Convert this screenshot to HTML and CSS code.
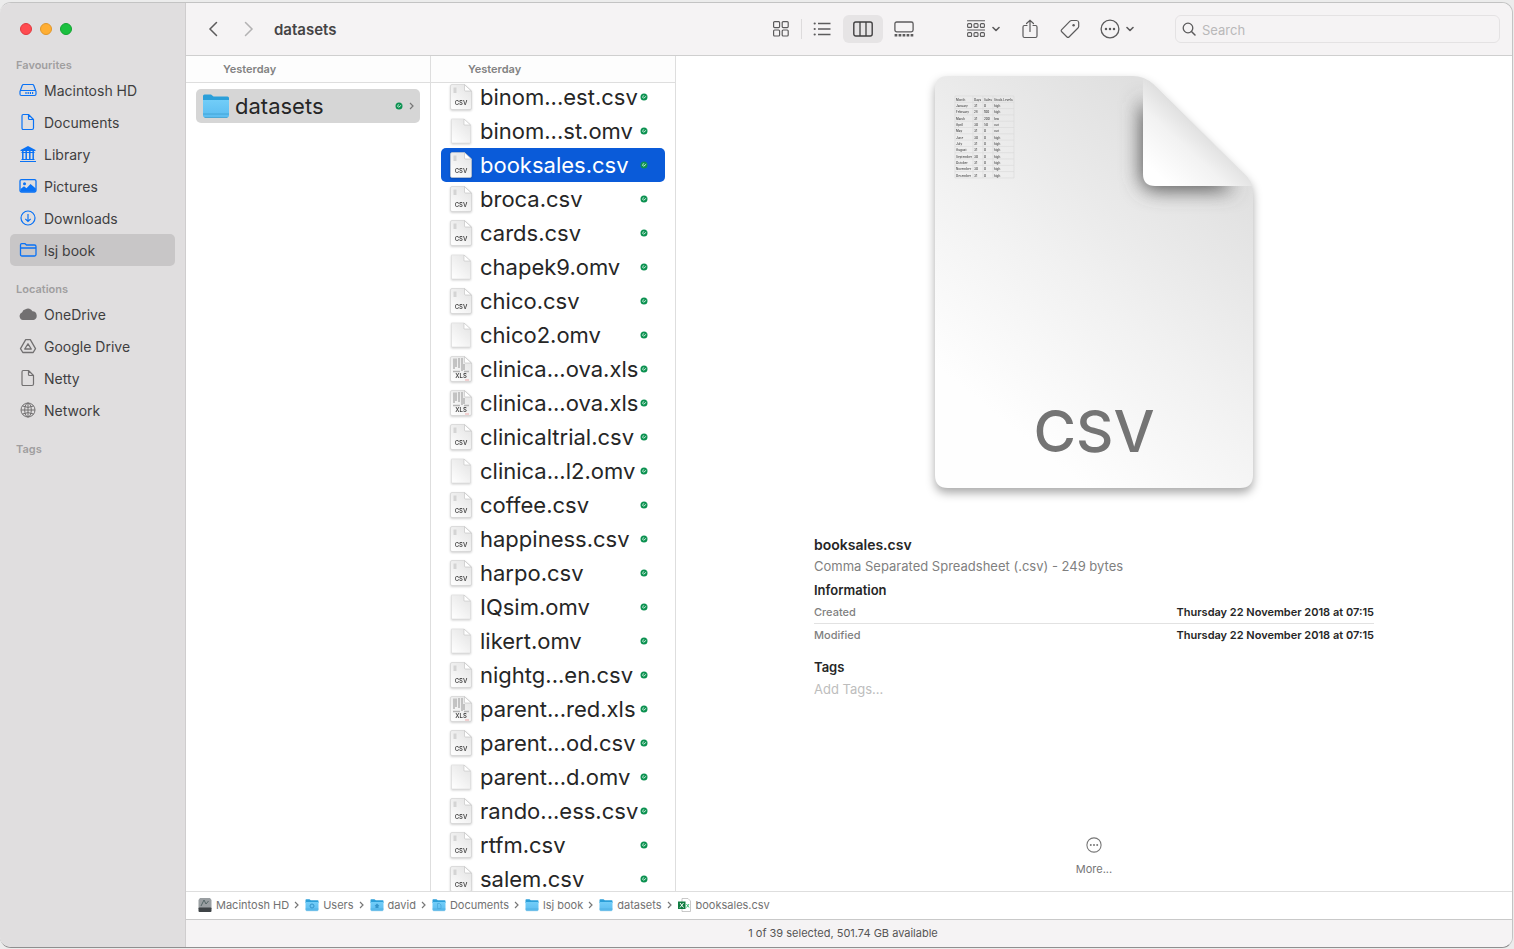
FILE: index.html
```html
<!DOCTYPE html>
<html lang="en-GB">
<head>
  <meta charset="utf-8">
  <title>datasets</title>
  <link rel="stylesheet" href="styles.css">
</head>

<body>
  <!-- Shared icons -->
  <svg class="sprite" aria-hidden="true">
    <defs>
      <linearGradient id="paper" x1="1" y1="0" x2="0.2" y2="1">
        <stop offset="0" stop-color="#e2e2e2"/>
        <stop offset="1" stop-color="#fdfdfd"/>
      </linearGradient>
      <linearGradient id="folder-front" x1="0" y1="0" x2="0" y2="1">
        <stop offset="0" stop-color="#72cdf8"/>
        <stop offset="1" stop-color="#5bbcf0"/>
      </linearGradient>
    </defs>
    <symbol id="page" viewBox="0 0 22 26">
      <path d="M2 .5H14.5L21.5 7V24Q21.5 25.500 20 25.500H2Q.5 25.500 .5 24V2Q.5.5 2 .5Z" fill="url(#paper)" stroke="#cfcfcf" stroke-width=".6"/>
      <path d="M14.500.7V6Q14.500 7 15.500 7H21.300Z" fill="#fff" stroke="#bdbdbd" stroke-width=".6"/>
    </symbol>
    <symbol id="csv" viewBox="0 0 22 26">
      <use href="#page" width="22" height="26"/>
      <path d="M3.500 3.500H6.500V9H3.500Z" fill="#d4d4d4"/>
      <text x="11" y="21" class="ext">CSV</text>
    </symbol>
    <symbol id="xls" viewBox="0 0 22 26">
      <use href="#page" width="22" height="26"/>
      <path d="M4 2.500V13M6 2.500V11M9 2V12M12 2V15M14 8V14M3 15.500H10M14 15.500H19" stroke="#b4b4b4" stroke-width="1.500"/>
      <path d="M15 24H19" stroke="#eba9a9"/>
      <text x="11" y="22" class="ext">XLS</text>
    </symbol>
    <symbol id="omv" viewBox="0 0 22 26">
      <path d="M1.500 1H14L20.500 7V25H1.500Z" fill="url(#paper)" stroke="#dcdcdc" stroke-width=".6"/>
      <path d="M14 1V7H20.500Z" fill="#fff" stroke="#c4c4c4" stroke-width=".6"/>
    </symbol>
    <symbol id="synced" viewBox="0 0 8 8">
      <circle cx="4" cy="4" r="3.500" fill="#0b9150"/>
      <path d="M2.400 3.400L4.200 2.700M2.400 4L3.600 5.300L6.200 3.200" fill="none" stroke="#d8f3e4" stroke-width=".9"/>
    </symbol>
    <symbol id="folder" viewBox="0 0 28 26">
      <path d="M1 3Q1 1.500 2.500 1.500H9L11.500 3.500H25.500Q27 3.500 27 5V9H1Z" fill="#2b9fd9"/>
      <path d="M1 7H27V22.500Q27 24.500 25 24.500H3Q1 24.500 1 22.500Z" fill="url(#folder-front)"/>
      <path d="M1 21H27M2.500 24.500H25.500" stroke="#3b9fd0" stroke-width=".8"/>
    </symbol>
    <symbol id="arrow-right" viewBox="0 0 5 8">
      <path d="M1 1L4 4L1 7" fill="none" stroke="currentColor" stroke-width="1.200"/>
    </symbol>
    <symbol id="arrow-down" viewBox="0 0 8 6">
      <path d="M1 1.500L4 4.500L7 1.500" fill="none" stroke="currentColor" stroke-width="1.600" stroke-linecap="round" stroke-linejoin="round"/>
    </symbol>
    <symbol id="ellipsis" viewBox="0 0 18 18">
      <circle cx="9" cy="9" r="8" fill="none" stroke="currentColor" stroke-width="1.200"/>
      <circle cx="5.400" cy="9" r="1.100" fill="currentColor"/>
      <circle cx="9" cy="9" r="1.100" fill="currentColor"/>
      <circle cx="12.600" cy="9" r="1.100" fill="currentColor"/>
    </symbol>
    <symbol id="sheet" viewBox="0 0 18 18">
      <path d="M4.200 1.500H9.500L14.500 6.500V15Q14.500 16.500 13 16.500H4.200Q3 16.500 3 15V3Q3 1.500 4.200 1.500ZM9.500 1.500V5.500Q9.500 6.500 10.500 6.500H14.500" fill="none" stroke="currentColor" stroke-width="1.200" stroke-linejoin="round"/>
    </symbol>
  </svg>

  <div class="window">
    <aside class="sidebar">
      <div class="lights">
        <button class="light red" aria-label="Close"></button>
        <button class="light yellow" aria-label="Minimise"></button>
        <button class="light green" aria-label="Zoom"></button>
      </div>

      <nav>
        <h2>Favourites</h2>
        <ul class="places">
          <li><a href="#">
            <svg viewBox="0 0 18 18"><path d="M4.500 3.500H13.500Q14.400 3.500 14.800 4.500L17 10.500V13Q17 14.500 15.500 14.500H2.500Q1 14.500 1 13V10.500L3.200 4.500Q3.600 3.500 4.500 3.500ZM1.500 9.500H16.500" fill="none" stroke="currentColor" stroke-width="1.200"/><path d="M7 11V13M9.200 11V13M11.400 11V13M13.600 11V13" stroke="currentColor" stroke-width="1.200"/></svg>
            Macintosh HD</a></li>
          <li><a href="#"><svg><use href="#sheet"/></svg>Documents</a></li>
          <li><a href="#">
            <svg viewBox="0 0 18 18"><path d="M9 1L16.500 5V6H1.500V5Z" fill="currentColor"/><path d="M3.800 6V15M7.200 6V15M10.800 6V15M14.200 6V15" stroke="currentColor" stroke-width="1.500"/><path d="M2.500 7.500H15.500M2.500 14.500H15.500M1 16.500H17" stroke="currentColor" stroke-width="1"/></svg>
            Library</a></li>
          <li><a href="#">
            <svg viewBox="0 0 18 18"><rect x="1" y="2.600" width="16" height="12.400" rx="1.500" fill="none" stroke="currentColor" stroke-width="1.300"/><circle cx="5.500" cy="6.800" r="1.500" fill="currentColor"/><path d="M1.500 12L5 9.200L7.500 11.300L11.500 7L16.800 11.500V14.800H1.500Z" fill="currentColor"/></svg>
            Pictures</a></li>
          <li><a href="#">
            <svg viewBox="0 0 18 18"><circle cx="9" cy="9" r="7" fill="none" stroke="currentColor" stroke-width="1.200"/><path d="M9 5V12.500M6.300 9.800L9 12.500L11.700 9.800" fill="none" stroke="currentColor" stroke-width="1.200"/></svg>
            Downloads</a></li>
          <li><a href="#" class="current">
            <svg viewBox="0 0 18 18"><path d="M1.500 13V4Q1.500 2.700 2.800 2.700H6L7.500 4H15.500Q17 4 17 5.500V13.500Q17 15 15.500 15H3Q1.500 15 1.500 13.500ZM1.500 7H17" fill="none" stroke="currentColor" stroke-width="1.300"/></svg>
            lsj book</a></li>
        </ul>

        <h2>Locations</h2>
        <ul class="places grey">
          <li><a href="#">
            <svg viewBox="0 0 18 18"><path d="M4 15A4 4 0 0 1 3.200 7.300A4 4 0 0 1 6.500 4.200A5 5 0 0 1 13.500 6.200A4.500 4.500 0 0 1 14.500 15Z" fill="currentColor"/></svg>
            OneDrive</a></li>
          <li><a href="#">
            <svg viewBox="0 0 18 18"><path d="M6.700 2.700H11.300L16.500 11.600L14.200 15.500H3.800L1.500 11.600ZM9 6.800L12.300 12H5.700Z" fill="none" stroke="currentColor" stroke-width="1.300" stroke-linejoin="round"/></svg>
            Google Drive</a></li>
          <li><a href="#"><svg><use href="#sheet"/></svg>Netty</a></li>
          <li><a href="#">
            <svg viewBox="0 0 18 18"><g fill="none" stroke="currentColor"><circle cx="9" cy="9" r="7"/><ellipse cx="9" cy="9" rx="3.300" ry="7"/><path d="M9 2V16M2 9H16M3.500 5Q9 7.800 14.500 5M3.500 13Q9 10.200 14.500 13"/></g></svg>
            Network</a></li>
        </ul>

        <h2>Tags</h2>
      </nav>
    </aside>

    <main>
      <header class="toolbar">
        <button class="arrow" aria-label="Back"><svg viewBox="0 0 10 16"><path d="M8.500 1.500L2 8L8.500 14.500" fill="none" stroke="currentColor" stroke-width="1.500" stroke-linecap="round"/></svg></button>
        <button class="arrow forward" aria-label="Forward"><svg viewBox="0 0 10 16"><path d="M1.500 1.500L8 8L1.500 14.500" fill="none" stroke="currentColor" stroke-width="1.500" stroke-linecap="round"/></svg></button>
        <h1>datasets</h1>

        <div class="views">
          <button aria-label="Icons"><svg viewBox="0 0 20 18"><g fill="none" stroke="currentColor" stroke-width="1.200"><rect x="2.600" y="1.600" width="6" height="6" rx="1"/><rect x="11.200" y="1.600" width="6" height="6" rx="1"/><rect x="2.600" y="10" width="6" height="6" rx="1"/><rect x="11.200" y="10" width="6" height="6" rx="1"/></g></svg></button>
          <span class="divider"></span>
          <button aria-label="List"><svg viewBox="0 0 20 18"><path d="M6 3.500H18.500M6 9H18.500M6 14.500H18.500" stroke="currentColor" stroke-width="1.300"/><g fill="currentColor"><circle cx="2.700" cy="3.500" r="1.100"/><circle cx="2.700" cy="9" r="1.100"/><circle cx="2.700" cy="14.500" r="1.100"/></g></svg></button>
          <button class="pressed" aria-label="Columns"><svg viewBox="0 0 20 18"><rect x=".8" y="2" width="18.400" height="14" rx="2" fill="none" stroke="currentColor" stroke-width="1.400"/><path d="M7 2V16M13 2V16" stroke="currentColor" stroke-width="1.300"/></svg></button>
          <button aria-label="Gallery"><svg viewBox="0 0 20 18"><rect x=".9" y="2" width="18.200" height="9.800" rx="1.800" fill="none" stroke="currentColor" stroke-width="1.300"/><path d="M.6 15.300H19.500" stroke="currentColor" stroke-width="2.400" stroke-dasharray="2.700 1.300"/></svg></button>
        </div>

        <div class="actions">
          <button class="menu" aria-label="Group"><svg viewBox="0 0 20 18"><g fill="none" stroke="currentColor" stroke-width="1.100"><path d="M1 .7H19M1 10H19"/><rect x="1.600" y="3.600" width="4" height="3.800" rx="1"/><rect x="8" y="3.600" width="4" height="3.800" rx="1"/><rect x="14.400" y="3.600" width="4" height="3.800" rx="1"/><rect x="1.600" y="12.600" width="4" height="3.800" rx="1"/><rect x="8" y="12.600" width="4" height="3.800" rx="1"/><rect x="14.400" y="12.600" width="4" height="3.800" rx="1"/></g></svg><svg class="down"><use href="#arrow-down"/></svg></button>
          <button aria-label="Share"><svg viewBox="0 0 20 20"><path d="M7 6.500H4.500Q3 6.500 3 8V17Q3 18.500 4.500 18.500H15.500Q17 18.500 17 17V8Q17 6.500 15.500 6.500H13M10 12.500V1.500M6.500 4.500L10 1.200L13.500 4.500" fill="none" stroke="currentColor" stroke-width="1.200" stroke-linecap="round"/></svg></button>
          <button aria-label="Tags"><svg viewBox="0 0 20 20"><path d="M11.500 1.500H16.500Q18.500 1.500 18.700 3.500V7.500Q18.600 8.500 17.700 9.300L9 18Q8 19 7 18L1.500 12.500Q.8 11.700 1.500 10.800L10 2.200Q10.700 1.500 11.500 1.500Z" fill="none" stroke="currentColor" stroke-width="1.200"/><circle cx="13.600" cy="6.300" r="1.200" fill="currentColor"/></svg></button>
          <button class="menu" aria-label="More actions"><svg><use href="#ellipsis"/></svg><svg class="down"><use href="#arrow-down"/></svg></button>
        </div>

        <label class="search">
          <svg viewBox="0 0 14 14"><circle cx="6" cy="6" r="4.800" fill="none" stroke="currentColor" stroke-width="1.300"/><path d="M9.500 9.500L13 13" stroke="currentColor" stroke-width="1.500" stroke-linecap="round"/></svg>
          <input type="search" placeholder="Search" aria-label="Search">
        </label>
      </header>

      <div class="browser">
        <section class="column">
          <h2>Yesterday</h2>
          <ul class="files">
            <li><a href="#" class="opened"><svg class="dir"><use href="#folder"/></svg>datasets<svg class="badge"><use href="#synced"/></svg><svg class="chevron"><use href="#arrow-right"/></svg></a></li>
          </ul>
        </section>

        <section class="column">
          <h2>Yesterday</h2>
          <ul class="files scrolled">
            <li><a href="#"><svg class="doc"><use href="#csv"/></svg>binom...est.csv<svg class="badge"><use href="#synced"/></svg></a></li>
            <li><a href="#"><svg class="doc"><use href="#omv"/></svg>binom...st.omv<svg class="badge"><use href="#synced"/></svg></a></li>
            <li><a href="#" class="selected"><svg class="doc"><use href="#csv"/></svg>booksales.csv<svg class="badge"><use href="#synced"/></svg></a></li>
            <li><a href="#"><svg class="doc"><use href="#csv"/></svg>broca.csv<svg class="badge"><use href="#synced"/></svg></a></li>
            <li><a href="#"><svg class="doc"><use href="#csv"/></svg>cards.csv<svg class="badge"><use href="#synced"/></svg></a></li>
            <li><a href="#"><svg class="doc"><use href="#omv"/></svg>chapek9.omv<svg class="badge"><use href="#synced"/></svg></a></li>
            <li><a href="#"><svg class="doc"><use href="#csv"/></svg>chico.csv<svg class="badge"><use href="#synced"/></svg></a></li>
            <li><a href="#"><svg class="doc"><use href="#omv"/></svg>chico2.omv<svg class="badge"><use href="#synced"/></svg></a></li>
            <li><a href="#"><svg class="doc"><use href="#xls"/></svg>clinica...ova.xls<svg class="badge"><use href="#synced"/></svg></a></li>
            <li><a href="#"><svg class="doc"><use href="#xls"/></svg>clinica...ova.xls<svg class="badge"><use href="#synced"/></svg></a></li>
            <li><a href="#"><svg class="doc"><use href="#csv"/></svg>clinicaltrial.csv<svg class="badge"><use href="#synced"/></svg></a></li>
            <li><a href="#"><svg class="doc"><use href="#omv"/></svg>clinica...l2.omv<svg class="badge"><use href="#synced"/></svg></a></li>
            <li><a href="#"><svg class="doc"><use href="#csv"/></svg>coffee.csv<svg class="badge"><use href="#synced"/></svg></a></li>
            <li><a href="#"><svg class="doc"><use href="#csv"/></svg>happiness.csv<svg class="badge"><use href="#synced"/></svg></a></li>
            <li><a href="#"><svg class="doc"><use href="#csv"/></svg>harpo.csv<svg class="badge"><use href="#synced"/></svg></a></li>
            <li><a href="#"><svg class="doc"><use href="#omv"/></svg>IQsim.omv<svg class="badge"><use href="#synced"/></svg></a></li>
            <li><a href="#"><svg class="doc"><use href="#omv"/></svg>likert.omv<svg class="badge"><use href="#synced"/></svg></a></li>
            <li><a href="#"><svg class="doc"><use href="#csv"/></svg>nightg...en.csv<svg class="badge"><use href="#synced"/></svg></a></li>
            <li><a href="#"><svg class="doc"><use href="#xls"/></svg>parent...red.xls<svg class="badge"><use href="#synced"/></svg></a></li>
            <li><a href="#"><svg class="doc"><use href="#csv"/></svg>parent...od.csv<svg class="badge"><use href="#synced"/></svg></a></li>
            <li><a href="#"><svg class="doc"><use href="#omv"/></svg>parent...d.omv<svg class="badge"><use href="#synced"/></svg></a></li>
            <li><a href="#"><svg class="doc"><use href="#csv"/></svg>rando...ess.csv<svg class="badge"><use href="#synced"/></svg></a></li>
            <li><a href="#"><svg class="doc"><use href="#csv"/></svg>rtfm.csv<svg class="badge"><use href="#synced"/></svg></a></li>
            <li><a href="#"><svg class="doc"><use href="#csv"/></svg>salem.csv<svg class="badge"><use href="#synced"/></svg></a></li>
          </ul>
        </section>

        <section class="preview">
          <svg class="big-icon" viewBox="0 0 319 412" role="img" aria-label="CSV document">
            <defs>
              <linearGradient id="big-paper" gradientUnits="userSpaceOnUse" x1="270" y1="60" x2="50" y2="330">
                <stop offset="0" stop-color="#dfdfdf"/>
                <stop offset=".55" stop-color="#f1f1f1"/>
                <stop offset="1" stop-color="#fefefe"/>
              </linearGradient>
              <linearGradient id="fold" gradientUnits="userSpaceOnUse" x1="266" y1="50" x2="222" y2="98">
                <stop offset="0" stop-color="#dedede"/>
                <stop offset=".4" stop-color="#f2f2f2"/>
                <stop offset="1" stop-color="#fff"/>
              </linearGradient>
              <clipPath id="big-clip"><path d="M13 0H198Q209 0 218 8L312 101Q318 108 318 120V399Q318 412 305 412H13Q0 412 0 399V13Q0 0 13 0Z"/></clipPath>
              <filter id="soft" x="-50%" y="-50%" width="200%" height="200%"><feGaussianBlur stdDeviation="10"/></filter>
            </defs>
            <path d="M13 0H198Q209 0 218 8L312 101Q318 108 318 120V399Q318 412 305 412H13Q0 412 0 399V13Q0 0 13 0Z" fill="url(#big-paper)"/>
            <g clip-path="url(#big-clip)">
              <path d="M206 24V98Q206 114 222 114H300L250 60Z" fill="#555" filter="url(#soft)"/>
            </g>
            <path d="M208 2.500Q213 4 218 8L312 101Q316 105 317.500 110H220Q208 110 208 98Z" fill="url(#fold)"/>
            <path d="M20 20H79V102H20ZM38 20V102M48 20V102M58 20V102M20 26.300H79M20 32.600H79M20 38.900H79M20 45.200H79M20 51.500H79M20 57.800H79M20 64.100H79M20 70.400H79M20 76.700H79M20 83H79M20 89.300H79M20 95.600H79" fill="none" stroke="#d9d9d9" stroke-width=".6"/>
            <g class="sheet-text">
              <text x="21" y="25">Month</text><text x="39" y="25">Days</text><text x="49" y="25">Sales</text><text x="59" y="25">Stock.Levels</text>
              <text x="21" y="31">January</text><text x="39" y="31">31</text><text x="49" y="31">0</text><text x="59" y="31">high</text>
              <text x="21" y="37">February</text><text x="39" y="37">28</text><text x="49" y="37">100</text><text x="59" y="37">high</text>
              <text x="21" y="44">March</text><text x="39" y="44">31</text><text x="49" y="44">200</text><text x="59" y="44">low</text>
              <text x="21" y="50">April</text><text x="39" y="50">30</text><text x="49" y="50">50</text><text x="59" y="50">out</text>
              <text x="21" y="56">May</text><text x="39" y="56">31</text><text x="49" y="56">0</text><text x="59" y="56">out</text>
              <text x="21" y="63">June</text><text x="39" y="63">30</text><text x="49" y="63">0</text><text x="59" y="63">high</text>
              <text x="21" y="69">July</text><text x="39" y="69">31</text><text x="49" y="69">0</text><text x="59" y="69">high</text>
              <text x="21" y="75">August</text><text x="39" y="75">31</text><text x="49" y="75">0</text><text x="59" y="75">high</text>
              <text x="21" y="82">September</text><text x="39" y="82">30</text><text x="49" y="82">0</text><text x="59" y="82">high</text>
              <text x="21" y="88">October</text><text x="39" y="88">31</text><text x="49" y="88">0</text><text x="59" y="88">high</text>
              <text x="21" y="94">November</text><text x="39" y="94">30</text><text x="49" y="94">0</text><text x="59" y="94">high</text>
              <text x="21" y="101">December</text><text x="39" y="101">31</text><text x="49" y="101">0</text><text x="59" y="101">high</text>
            </g>
            <text x="159" y="376" class="big-ext">CSV</text>
          </svg>

          <div class="info">
            <h2>booksales.csv</h2>
            <p class="kind">Comma Separated Spreadsheet (.csv) - 249 bytes</p>
            <h3>Information</h3>
            <dl>
              <div><dt>Created</dt><dd>Thursday 22 November 2018 at 07:15</dd></div>
              <div><dt>Modified</dt><dd>Thursday 22 November 2018 at 07:15</dd></div>
            </dl>
            <h3><label for="tags">Tags</label></h3>
            <input id="tags" class="tags" type="text" placeholder="Add Tags...">
          </div>

          <button class="more"><svg><use href="#ellipsis"/></svg>More...</button>
        </section>
      </div>

      <nav class="path">
        <a href="#"><svg viewBox="0 0 14 14"><path d="M2 0H12L13.500 2V11H.5V2Z" fill="#9a9fa2"/><rect x=".5" y="9.500" width="13" height="4.500" rx="1" fill="#3f4447"/><path d="M3 8L6 2L8 6L10.500 3" fill="none" stroke="#566"/></svg>Macintosh HD</a>
        <svg class="chevron"><use href="#arrow-right"/></svg>
        <a href="#"><svg viewBox="0 0 14 14"><use href="#folder" width="14" height="14"/><circle cx="7" cy="8" r="2" fill="none" stroke="#3595cb"/></svg>Users</a>
        <svg class="chevron"><use href="#arrow-right"/></svg>
        <a href="#"><svg viewBox="0 0 14 14"><use href="#folder" width="14" height="14"/><path d="M4.500 8L7 5.500L9.500 8H8.500V10H5.500V8Z" fill="#3595cb"/></svg>david</a>
        <svg class="chevron"><use href="#arrow-right"/></svg>
        <a href="#"><svg viewBox="0 0 14 14"><use href="#folder" width="14" height="14"/><path d="M5.500 5.500H7.500L9 7V10.500H5.500Z" fill="none" stroke="#4aa9dc" stroke-width=".8"/></svg>Documents</a>
        <svg class="chevron"><use href="#arrow-right"/></svg>
        <a href="#"><svg><use href="#folder"/></svg>lsj book</a>
        <svg class="chevron"><use href="#arrow-right"/></svg>
        <a href="#"><svg><use href="#folder"/></svg>datasets</a>
        <svg class="chevron"><use href="#arrow-right"/></svg>
        <a href="#"><svg viewBox="0 0 14 14"><path d="M4 .5H10L12.500 3V13.500H4Z" fill="#fff" stroke="#bbb" stroke-width=".8"/><rect x="0" y="3.500" width="7.500" height="7.500" fill="#107c41"/><path d="M2 5L5.500 9.500M5.500 5L2 9.500" stroke="#fff"/><path d="M8.500 6L11 9.500M11 6L8.500 9.500" stroke="#3dbb75"/></svg>booksales.csv</a>
      </nav>

      <footer class="status">1 of 39 selected, 501.74 GB available</footer>
    </main>
  </div>
</body>
</html>
```
FILE: styles.css
```css
* {
  box-sizing: border-box;
}

body {
  font-family: Inter, "Liberation Sans", sans-serif;
  font-size: 11px;
  margin: 0;
  height: 100vh;
  padding: 2px 1px 1px 0;
  background: #ececec;
  color: #262626;
  overflow: hidden;
}

h1, h2, h3, p, ul, dl, dd {
  margin: 0;
  padding: 0;
}

ul {
  list-style: none;
}

a {
  color: inherit;
  text-decoration: none;
}

button {
  font: inherit;
  color: inherit;
  border: 0;
  padding: 0;
  background: none;
}

svg {
  flex: none;
}

.sprite {
  position: absolute;
  width: 0;
  height: 0;
}

.window {
  display: flex;
  height: 100%;
  border: 1px solid #c3c3c3;
  border-left: 0;
  border-bottom-color: #8f8f8f;
  border-radius: 11px;
  overflow: hidden;
  background: #fff;
}

/* Sidebar */

.sidebar {
  flex: none;
  width: 186px;
  padding: 0 10px;
  background: #e0dedf;
  border-right: 1px solid #cfcdce;
}

.lights {
  display: flex;
  gap: 8px;
  padding: 20px 10px 22px;
}

.light {
  width: 12px;
  height: 12px;
  border-radius: 50%;
  border: 1px solid #e1383f;
  background: #ff4b50;
}

.light.yellow {
  border-color: #e0972a;
  background: #ffae33;
}

.light.green {
  border-color: #12a431;
  background: #1bc03f;
}

.sidebar h2 {
  padding-left: 6px;
  font-size: 11px;
  line-height: 17px;
  font-weight: 600;
  color: #a09e9f;
}

.places {
  margin-bottom: 15px;
}

.places a {
  display: flex;
  align-items: center;
  gap: 7px;
  height: 32px;
  padding-left: 9px;
  border-radius: 5px;
  font-size: 14px;
  color: #3f3e3f;
}

.places a.current {
  background: #c8c6c7;
}

.places svg {
  width: 18px;
  height: 18px;
  color: #0a72f5;
}

.places.grey svg {
  color: #727071;
}

/* Toolbar */

main {
  flex: 1;
  min-width: 0;
  display: flex;
  flex-direction: column;
}

.toolbar {
  display: flex;
  align-items: center;
  flex: none;
  height: 53px;
  padding: 0 12px 0 9px;
  background: #f5f3f4;
  border-bottom: 1px solid #cfcfcf;
  color: #5c5b5c;
}

.toolbar h1 {
  margin-left: 7px;
  font-size: 15px;
  font-weight: 600;
  color: #454445;
}

.toolbar button {
  display: flex;
  align-items: center;
  justify-content: center;
  width: 40px;
  height: 28px;
  border-radius: 6px;
}

.toolbar button svg {
  width: 20px;
  height: 20px;
}

.toolbar .arrow {
  width: 36px;
}

.toolbar .arrow svg {
  width: 10px;
  height: 16px;
}

.toolbar .forward {
  color: #b3b2b3;
}

.toolbar .pressed {
  background: #e6e4e5;
  color: #403f40;
}

.views,
.actions {
  display: flex;
  align-items: center;
}

.views {
  margin-left: auto;
  gap: 1px;
}

.divider {
  width: 1px;
  height: 20px;
  margin: 0 -1px;
  background: #dddbdc;
}

.actions {
  margin: 0 31px 0 32px;
}

.toolbar .menu {
  gap: 6px;
  width: 54px;
}

.toolbar .menu .down {
  width: 8px;
  height: 6px;
}

.search {
  display: flex;
  align-items: center;
  gap: 6px;
  flex: 0 1 325px;
  height: 28px;
  padding: 0 6px;
  border: 1px solid #e4e2e3;
  border-radius: 6px;
}

.search svg {
  width: 14px;
  height: 14px;
}

.search input {
  flex: 1;
  min-width: 0;
  padding: 2px 0 0;
  border: 0;
  outline: 0;
  background: none;
  font: inherit;
  font-size: 13px;
}

.search input::placeholder {
  color: #b9b8b9;
}

/* Columns */

.browser {
  flex: 1;
  min-height: 0;
  display: flex;
}

.column {
  flex: none;
  width: 245px;
  border-right: 1px solid #dedede;
  overflow: hidden;
}

.column h2 {
  position: relative;
  z-index: 1;
  height: 27px;
  padding-left: 37px;
  background: #fdfdfd;
  border-bottom: 1px solid #dedede;
  font-size: 11px;
  line-height: 26px;
  font-weight: 600;
  color: #828282;
}

.files {
  padding: 6px 10px;
}

.files.scrolled {
  margin-top: -3px;
  padding-top: 0;
}

.files a {
  display: flex;
  align-items: center;
  height: 34px;
  padding: 0 17px 0 9px;
  border-radius: 5px;
  font-size: 22px;
  white-space: nowrap;
}

.files a.opened {
  padding: 0 6px 0 6px;
  background: #d6d6d6;
}

.files a.selected {
  background: #0a5bd9;
  color: #fff;
}

.doc {
  width: 22px;
  height: 26px;
  margin-right: 8px;
  filter: drop-shadow(0 1px 1px #0003);
}

.dir {
  width: 28px;
  height: 26px;
  margin-right: 5px;
}

.badge {
  width: 8px;
  height: 8px;
  margin-left: auto;
}

.chevron {
  width: 5px;
  height: 8px;
  color: #777;
}

.files .chevron {
  margin-left: 6px;
}

.ext {
  font-size: 6px;
  font-weight: 600;
  text-anchor: middle;
  fill: #444;
}

/* Preview */

.preview {
  flex: 1;
  min-width: 0;
  display: flex;
  flex-direction: column;
  align-items: center;
  padding: 20px 40px 14px;
}

.big-icon {
  width: 319px;
  height: 412px;
  overflow: visible;
  filter: drop-shadow(0 5px 5px #0005);
}

.big-ext {
  font-size: 58px;
  font-weight: 500;
  text-anchor: middle;
  fill: #747474;
}

.sheet-text {
  font-size: 3px;
  font-weight: 600;
  fill: #555;
}

.info {
  width: 100%;
  max-width: 560px;
  margin-top: 46px;
}

.info h2 {
  font-size: 14px;
  line-height: 21px;
  font-weight: 600;
}

.info h3 {
  font-size: 13px;
  line-height: 22px;
  font-weight: 600;
}

.kind {
  margin-bottom: 2px;
  font-size: 13px;
  line-height: 22px;
  color: #7f7f7f;
}

.info dl {
  margin-bottom: 10px;
}

.info dl div {
  display: flex;
  justify-content: space-between;
  line-height: 22px;
  font-weight: 500;
}

.info dl div + div {
  border-top: 1px solid #e2e2e2;
}

.info dt {
  color: #7f7f7f;
}

.info dd {
  font-weight: 600;
}

.tags {
  width: 100%;
  height: 22px;
  padding: 0;
  border: 0;
  outline: 0;
  font: inherit;
  font-size: 13px;
}

.tags::placeholder {
  color: #bdbdbd;
}

.more {
  display: flex;
  flex-direction: column;
  align-items: center;
  gap: 8px;
  margin-top: auto;
  line-height: 16px;
  color: #767676;
}

.more svg {
  width: 16px;
  height: 16px;
}

/* Path and status bars */

.path {
  display: flex;
  align-items: center;
  gap: 5px;
  flex: none;
  height: 28px;
  padding: 0 12px 1px;
  border-top: 1px solid #dedede;
  color: #727272;
}

.path a {
  display: flex;
  align-items: center;
  gap: 4px;
}

.path .chevron {
  margin-right: 1px;
}

.path a svg {
  width: 14px;
  height: 14px;
}

.status {
  flex: none;
  height: 28px;
  padding-right: 12px;
  background: #f5f3f4;
  border-top: 1px solid #c9c9c9;
  line-height: 26px;
  text-align: center;
  color: #555;
}
```
